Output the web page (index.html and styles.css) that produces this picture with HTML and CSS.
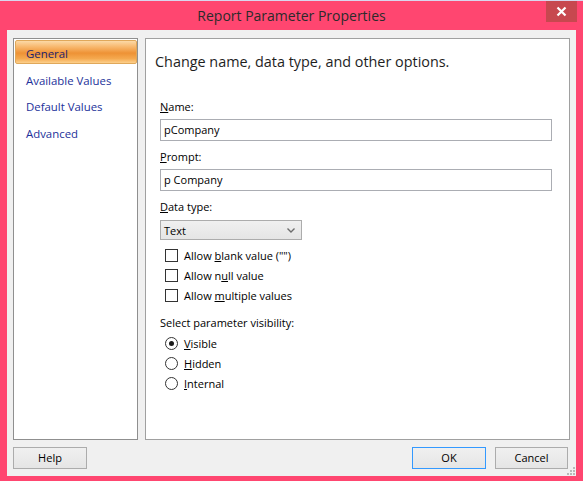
FILE: index.html
```html
<!DOCTYPE html>
<html>
<head>
<meta charset="utf-8">
<title>Report Parameter Properties</title>
<link rel="stylesheet" href="styles.css">
</head>
<body>
<div class="window">
  <div class="topline"></div>
  <div class="titlebar">
    <span class="title">Report Parameter Properties</span>
    <div class="close">
      <svg width="11" height="11" viewBox="0 0 11 11"><path d="M1.5 1.5 L9.5 9.5 M9.5 1.5 L1.5 9.5" stroke="#fff" stroke-width="2.2" fill="none"/></svg>
    </div>
  </div>
  <div class="client">
    <div class="panels">
      <div class="nav">
        <div class="nav-item selected">General</div>
        <div class="nav-item">Available Values</div>
        <div class="nav-item">Default Values</div>
        <div class="nav-item">Advanced</div>
      </div>
      <div class="main">
        <div class="heading">Change name, data type, and other options.</div>
        <div class="label first"><u>N</u>ame:</div>
        <div class="input">pCompany</div>
        <div class="label"><u>P</u>rompt:</div>
        <div class="input">p Company</div>
        <div class="label"><u>D</u>ata type:</div>
        <div class="select">
          <span>Text</span>
          <svg width="8" height="5" viewBox="0 0 8 5"><path d="M0.5 0.5 L4 4 L7.5 0.5" stroke="#6d6d6d" stroke-width="1.4" fill="none"/></svg>
        </div>
        <div class="checks">
          <div class="opt"><span class="box"></span><span>Allow <u>b</u>lank value ("")</span></div>
          <div class="opt"><span class="box"></span><span>Allow n<u>u</u>ll value</span></div>
          <div class="opt"><span class="box"></span><span>Allow <u>m</u>ultiple values</span></div>
        </div>
        <div class="label vis">Select parameter visibility:</div>
        <div class="radios">
          <div class="opt"><span class="radio checked"></span><span><u>V</u>isible</span></div>
          <div class="opt"><span class="radio"></span><span><u>H</u>idden</span></div>
          <div class="opt"><span class="radio"></span><span><u>I</u>nternal</span></div>
        </div>
      </div>
    </div>
    <div class="buttons">
      <div class="btn">Help</div>
      <div class="spacer"></div>
      <div class="btn default">OK</div>
      <div class="btn cancel">Cancel</div>
    </div>
    <svg class="grip" width="10" height="10" viewBox="0 0 10 10">
      <rect x="7" y="1" width="2" height="2" fill="#b8b8b8"/>
      <rect x="4" y="4" width="2" height="2" fill="#b8b8b8"/>
      <rect x="7" y="4" width="2" height="2" fill="#b8b8b8"/>
      <rect x="1" y="7" width="2" height="2" fill="#b8b8b8"/>
      <rect x="4" y="7" width="2" height="2" fill="#b8b8b8"/>
      <rect x="7" y="7" width="2" height="2" fill="#b8b8b8"/>
    </svg>
  </div>
</div>
</body>
</html>
```

FILE: styles.css
```css
* { box-sizing: border-box; }
html, body { margin: 0; padding: 0; }
body {
  width: 583px;
  height: 481px;
  background: #ff4670;
  font-family: "Open Sans", "Noto Sans", sans-serif;
  font-size: 11px;
  color: #000;
  overflow: hidden;
}
.window {
  width: 583px;
  height: 481px;
  display: flex;
  flex-direction: column;
}
.topline {
  height: 1px;
  background: #d9d6ee;
}
.titlebar {
  height: 29px;
  position: relative;
  display: flex;
  align-items: center;
  justify-content: center;
}
.title {
  font-size: 14px;
  color: #2b2b2b;
  margin-top: -1px;
}
.close {
  position: absolute;
  right: 6px;
  top: 0;
  width: 31px;
  height: 21px;
  background: #c7484f;
  display: flex;
  align-items: center;
  justify-content: center;
}
.client {
  position: relative;
  flex: 1;
  margin: 0 7px 5px 7px;
  background: #f0f0f0;
  padding: 8px 6px 7px 6px;
  display: flex;
  flex-direction: column;
}
.panels {
  flex: 1;
  display: flex;
  gap: 7px;
}
.nav {
  width: 125px;
  border: 1px solid #8f8f8f;
  background: #fff;
  padding: 1px 0 0 1px;
}
.nav-item {
  height: 26.67px;
  padding: 6px 0 0 11px;
  line-height: 16px;
  font-size: 11.4px;
  color: #22319a;
}
.nav-item.selected {
  height: 24px;
  margin-bottom: 2.67px;
  color: #1b1f6e;
  border: 1px solid #e0a85a;
  border-radius: 2px;
  padding: 5px 0 0 10px;
  background: linear-gradient(to bottom, #fcd9a6 0%, #f7b366 30%, #ee9235 55%, #f5a94f 80%, #fcd08c 100%);
}
.main {
  flex: 1;
  border: 1px solid #a0a0a0;
  background: #fff;
  padding: 13px 17px 0 14px;
  display: flex;
  flex-direction: column;
}
.heading {
  font-size: 14.4px;
  line-height: 20px;
  color: #1e1e1e;
  margin-left: -5px;
}
.label {
  line-height: 16px;
  margin-top: 8px;
}
.label.first { margin-top: 27px; }
.label.vis { margin-top: 10px; }
.input {
  margin-top: 4px;
  height: 22px;
  border: 1px solid #abadb3;
  padding: 0 3px;
  line-height: 20px;
}
.select {
  margin-top: 5px;
  width: 142px;
  height: 20px;
  border: 1px solid #acacac;
  background: linear-gradient(to bottom, #f0f0f0, #e5e5e5);
  display: flex;
  align-items: center;
  justify-content: space-between;
  padding: 0 6px 0 3px;
}
.checks { margin-top: 5px; }
.radios { margin-top: 2px; }
.opt {
  height: 20px;
  display: flex;
  align-items: center;
  padding-left: 5px;
  gap: 6px;
}
.box {
  width: 13px;
  height: 13px;
  border: 1px solid #333;
  background: #fff;
}
.radio {
  width: 13px;
  height: 13px;
  border: 1px solid #333;
  border-radius: 50%;
  background: #fff;
  display: flex;
  align-items: center;
  justify-content: center;
}
.radio.checked::after {
  content: "";
  width: 5px;
  height: 5px;
  border-radius: 50%;
  background: #1a1a1a;
}
.buttons {
  margin-top: 7px;
  height: 22px;
  display: flex;
  gap: 9px;
  padding-right: 2px;
}
.spacer { flex: 1; }
.btn {
  width: 74px;
  height: 22px;
  border: 1px solid #acacac;
  background: linear-gradient(to bottom, #f0f0f0, #e5e5e5);
  display: flex;
  align-items: center;
  justify-content: center;
  padding-bottom: 1px;
}
.btn.default { border-color: #3399ff; }
.btn.cancel { width: 73px; }
.grip {
  position: absolute;
  right: 0;
  bottom: 0;
}
```
